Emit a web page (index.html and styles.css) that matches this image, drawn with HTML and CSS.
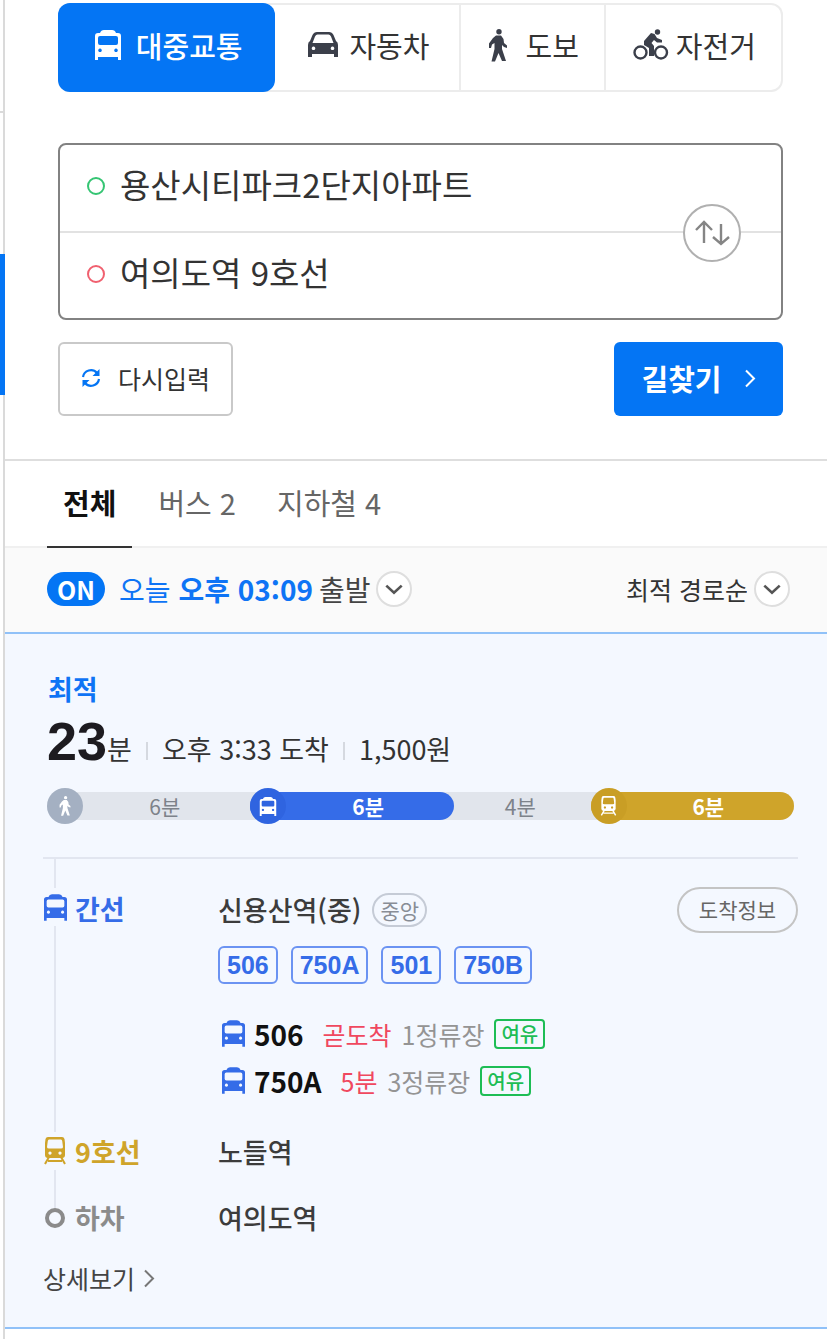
FILE: index.html
```html
<!DOCTYPE html>
<html lang="ko">
<head>
<meta charset="utf-8">
<meta name="viewport" content="width=device-width, initial-scale=1">
<title>길찾기</title>
<link rel="stylesheet" href="styles.css">
</head>
<body>
<svg class="sprite" aria-hidden="true">
  <symbol id="bus" viewBox="0 0 26 30">
    <path fill-rule="evenodd" d="M0 6Q0 3 3 3H5Q6 0 9 0H17Q20 0 21 3H23Q26 3 26 6V30H23V27H3V30H0ZM5 6Q3 6 3 8V13Q3 15 5 15H21Q23 15 23 13V8Q23 6 21 6ZM5 18.500a1.800 1.800 0 1 0 .01 0ZM21 18.500a1.800 1.800 0 1 0 .01 0Z"/>
  </symbol>
  <symbol id="car" viewBox="0 0 30 26">
    <path fill-rule="evenodd" d="M9 0H21Q24 0 25.500 3L28 9Q30 10 30 13V25H26V22H4V25H0V13Q0 10 2 9L4.500 3Q6 0 9 0ZM9.500 2.500Q8 2.500 7 4.500L4.500 11H25.500L23 4.500Q22 2.500 20.500 2.500ZM5.500 14.500a1.800 1.800 0 1 0 .01 0ZM24.500 14.500a1.800 1.800 0 1 0 .01 0Z"/>
  </symbol>
  <symbol id="walk" viewBox="0 0 18 33">
    <circle cx="10" cy="2.800" r="2.700"/>
    <path d="M7 6.500H12L14.500 10L15 14L18 16.500V19L15 18L13 16V20L17 32H13L9.500 24L6 32.500H2.500L5.500 20V14L3 15.500L2 19H0V14.500L4 9Z"/>
  </symbol>
  <symbol id="bike" viewBox="0 0 36 32">
    <circle cx="7.500" cy="23.500" r="6" fill="none" stroke="currentColor" stroke-width="2.400"/>
    <circle cx="28" cy="23.500" r="6" fill="none" stroke="currentColor" stroke-width="2.400"/>
    <circle cx="24.500" cy="3" r="2.700"/>
    <path d="M18 4L21.500 5L24 9L29 11V13.500H24L21 11L18.500 14L21 17V27H16V19L11 16V12Z"/>
  </symbol>
  <symbol id="train" viewBox="0 0 22 28">
    <path fill-rule="evenodd" d="M4 0H18Q20 0 20.500 2L21 6V18Q21 21 18 21H4Q1 21 1 18V6L1.500 2Q2 0 4 0ZM5 2.500Q4 2.500 3.800 4L3 10Q3 11.500 5 11.500H17Q19 11.500 19 10L18.200 4Q18 2.500 17 2.500ZM6 14.500a1.600 1.600 0 1 0 .01 0ZM16 14.500a1.600 1.600 0 1 0 .01 0Z"/>
    <path d="M5 20L1 27M17 20L21 27M4 24H18" fill="none" stroke="currentColor" stroke-width="2"/>
  </symbol>
  <symbol id="down" viewBox="0 0 16 10">
    <path d="M1 1.500L8 8L15 1.500" fill="none" stroke="currentColor" stroke-width="2.400"/>
  </symbol>
  <symbol id="right" viewBox="0 0 12 18">
    <path d="M2 1L10 9L2 17" fill="none" stroke="currentColor" stroke-width="2"/>
  </symbol>
</svg>
<div class="app">
  <div class="rail"><span class="rail-top"></span><span class="rail-gap"></span><span class="rail-active"></span></div>
  <main class="panel">
    <section class="search">
      <div class="modes">
        <button class="mode mode-on" type="button"><svg class="i-bus"><use href="#bus"/></svg>대중교통</button>
        <button class="mode" type="button"><svg class="i-car"><use href="#car"/></svg>자동차</button>
        <button class="mode mode-walk" type="button"><svg class="i-walk"><use href="#walk"/></svg>도보</button>
        <button class="mode mode-bike" type="button"><svg class="i-bike"><use href="#bike"/></svg>자전거</button>
      </div>
      <form class="route-form">
        <div class="fields">
          <div class="field"><span class="dot dot-start"></span><input type="text" aria-label="출발지" value="용산시티파크2단지아파트"></div>
          <div class="field"><span class="dot dot-end"></span><input type="text" aria-label="도착지" value="여의도역 9호선"></div>
          <button class="swap" type="button" aria-label="출발지와 도착지 바꾸기">
            <svg viewBox="0 0 36 26"><path d="M10 23V2M2 10L10 2L18 10M27 4V24M19 17L27 24L35 17"/></svg>
          </button>
        </div>
        <div class="actions">
          <button class="reset" type="reset">
            <svg viewBox="0 0 20 20"><path d="M2 9A8 8 0 0 1 16 5M18 11A8 8 0 0 1 4 15" fill="none" stroke="currentColor" stroke-width="2.200"/><path d="M18.500 1V8H11.500ZM1.500 19V12H8.500Z"/></svg>다시입력
          </button>
          <button class="find" type="submit">길찾기<svg class="i-right"><use href="#right"/></svg></button>
        </div>
      </form>
    </section>
    <nav class="filters">
      <a class="filter filter-on" href="#all">전체</a>
      <a class="filter" href="#busonly">버스 2</a>
      <a class="filter" href="#subway">지하철 4</a>
    </nav>
    <div class="options">
      <button class="depart" type="button"><span class="on">ON</span><span class="when">오늘 <b>오후 03:09</b></span><span>출발</span><span class="round"><svg class="i-down"><use href="#down"/></svg></span></button>
      <label class="sort"><select aria-label="정렬"><option>최적 경로순</option></select><span class="round"><svg class="i-down"><use href="#down"/></svg></span></label>
    </div>
    <article class="card">
      <div class="best">최적</div>
      <div class="summary"><strong>23</strong><span class="unit">분</span><span class="sep"></span><span>오후 3:33 도착</span><span class="sep"></span><span>1,500원</span></div>
      <div class="track">
        <div class="seg seg-walk seg-long"><span class="knob"><svg class="k-walk"><use href="#walk"/></svg></span><span class="mins">6분</span></div>
        <div class="seg seg-bus seg-long"><span class="knob"><svg class="k-bus"><use href="#bus"/></svg></span><span class="mins">6분</span></div>
        <div class="seg seg-short"><span class="mins">4분</span></div>
        <div class="seg seg-train seg-long"><span class="knob"><svg class="k-train"><use href="#train"/></svg></span><span class="mins">6분</span></div>
      </div>
      <ol class="steps">
        <li class="step step-bus">
          <div class="marker"><span class="line lead"></span><span class="badge"><svg class="s-bus"><use href="#bus"/></svg></span><span class="line"></span></div>
          <div class="kind">간선</div>
          <div class="detail">
            <div class="stop-row"><span class="stop">신용산역(중)</span><span class="center">중앙</span><button class="info" type="button">도착정보</button></div>
            <div class="chips"><span class="chip">506</span><span class="chip">750A</span><span class="chip">501</span><span class="chip">750B</span></div>
            <div class="arrivals">
              <div class="arrival"><svg class="s-bus"><use href="#bus"/></svg><b>506</b><span class="soon">곧도착</span><span class="stops">1정류장</span><span class="room">여유</span></div>
              <div class="arrival"><svg class="s-bus"><use href="#bus"/></svg><b>750A</b><span class="soon">5분</span><span class="stops">3정류장</span><span class="room">여유</span></div>
            </div>
          </div>
        </li>
        <li class="step step-train">
          <div class="marker"><span class="badge"><svg class="s-train"><use href="#train"/></svg></span><span class="line"></span></div>
          <div class="kind">9호선</div>
          <div class="detail stop">노들역</div>
        </li>
        <li class="step step-off">
          <div class="marker"><span class="line tail"></span><span class="ring"></span></div>
          <div class="kind">하차</div>
          <div class="detail stop">여의도역</div>
        </li>
      </ol>
      <a class="more" href="#detail">상세보기<svg class="i-more"><use href="#right"/></svg></a>
    </article>
  </main>
</div>
</body>
</html>
```
FILE: styles.css
```css
* { box-sizing: border-box; }
body {
  margin: 0;
  background: #fff;
  color: #333;
  font-family: "Noto Sans CJK KR", sans-serif;
  font-size: 27px;
  line-height: 40px;
}
button, input, select {
  margin: 0;
  padding: 0;
  border: 0;
  background: none;
  color: inherit;
  font: inherit;
}
button { cursor: pointer; }
a { color: inherit; text-decoration: none; }
svg { display: block; flex: none; fill: currentColor; }
.sprite { position: absolute; width: 0; height: 0; }

.app { display: grid; grid-template-columns: 5px 1fr; min-height: 100vh; }
.rail { display: flex; flex-direction: column; background: linear-gradient(to right, #fff 3px, #dadada 3px); }
.rail-top { height: 113px; border-bottom: 2px solid #dadada; }
.rail-gap { height: 141px; }
.rail-active { height: 141px; background: #0475f4; }

.search { padding: 3px 44px 43px 53px; border-bottom: 2px solid #dedede; }
.modes {
  display: grid;
  grid-template-columns: 217fr 183fr 145fr 179fr;
  height: 89px;
  border-radius: 12px;
  box-shadow: inset 0 0 0 2px #ececec;
}
.mode {
  display: flex;
  align-items: center;
  justify-content: center;
  gap: 11px;
  padding: 0 0 5px 4px;
  font-size: 29px;
}
.mode svg { color: #3b3f4a; }
.mode-on { border-radius: 12px; background: #0475f4; color: #fff; font-weight: 500; gap: 15px; }
.mode-on svg { color: #fff; }
.mode-walk { border-left: 2px solid #ececec; gap: 18px; }
.mode-bike { padding-left: 0; border-left: 2px solid #ececec; gap: 7px; }
.i-bus { width: 26px; height: 30px; }
.i-car { width: 30px; height: 26px; }
.i-walk { width: 18px; height: 33px; }
.i-bike { width: 36px; height: 32px; }

.fields {
  position: relative;
  margin-top: 51px;
  border: 2px solid #828282;
  border-radius: 8px;
}
.field { display: flex; align-items: center; height: 86px; padding: 0 120px 4px 27px; }
.field + .field { height: 87px; border-top: 2px solid #e2e2e2; }
.field input { flex: 1; min-width: 0; height: 56px; margin-left: 15px; padding-bottom: 4px; font-size: 33px; outline: 0; }
.dot { width: 18px; height: 18px; border: 2px solid; border-radius: 50%; }
.dot-start { color: #35c573; }
.dot-end { color: #f0606f; }
.swap {
  position: absolute;
  right: 40px;
  top: 59px;
  display: grid;
  place-items: center;
  width: 58px;
  height: 58px;
  border: 2px solid #b0b0b0;
  border-radius: 50%;
  background: #fff;
}
.swap svg { width: 36px; height: 26px; fill: none; stroke: #858585; stroke-width: 2.4; }
.actions { display: flex; justify-content: space-between; margin-top: 22px; }
.reset, .find { display: flex; align-items: center; justify-content: center; height: 74px; padding-bottom: 2px; border-radius: 6px; }
.reset { width: 175px; gap: 17px; border: 2px solid #c9c9c9; font-size: 25px; }
.reset svg { width: 20px; height: 20px; color: #0475f4; }
.find { width: 169px; gap: 22px; background: #0475f4; color: #fff; font-size: 29px; font-weight: 700; }
.i-right { width: 12px; height: 19px; }

.filters { display: flex; height: 87px; padding-left: 42px; border-bottom: 2px solid #f0f0f0; }
.filter { height: 87px; padding: 0 26px 0 16px; color: #666; font-size: 29px; line-height: 82px; }
.filter + .filter { padding-left: 26px; padding-right: 15px; }
.filter-on { padding: 0 16px; border-bottom: 2px solid #333; color: #111; font-weight: 700; }

.options {
  display: flex;
  align-items: center;
  justify-content: space-between;
  height: 84px;
  padding: 0 37px 2px 42px;
  background: #fafafa;
}
.depart { display: flex; align-items: center; gap: 6px; font-size: 28px; color: #444; }
.on { width: 58px; margin-right: 8px; border-radius: 17px; background: #0475f4; color: #fff; font-size: 25px; font-weight: 700; line-height: 34px; }
.when { color: #0e74f5; }
.round { display: grid; place-items: center; width: 36px; height: 36px; border: 2px solid #dedede; border-radius: 50%; background: #fff; color: #555; }
.i-down { width: 18px; height: 11px; }
.sort { display: flex; align-items: center; gap: 7px; font-size: 25px; }
.sort select { appearance: none; }

.card { padding: 35px 29px 29px 38px; border: solid #90c1f8; border-width: 2px 0; background: #f4f8ff; }
.best { padding-left: 5px; color: #0e74f5; font-weight: 700; }
.summary { display: flex; align-items: baseline; height: 64px; padding-left: 4px; line-height: 64px; }
.summary strong { color: #1d1b20; font-family: "Liberation Sans", sans-serif; font-size: 54px; }
.sep { width: 2px; height: 18px; margin: 0 14px; background: #d5d9e0; }
.track { display: flex; height: 28px; margin: 19px 4px 37px; border-radius: 14px; background: #e1e5ec; }
.seg { display: flex; align-items: center; min-width: 0; border-radius: 14px; color: #7d828a; font-size: 21px; line-height: 28px; }
.seg-long { flex: 204; }
.seg-short { flex: 137; }
.seg-bus { background: #356ce8; color: #fff; font-weight: 700; }
.seg-train { background: #cfa42a; color: #fff; font-weight: 700; }
.knob { display: grid; flex: none; place-items: center; width: 36px; height: 36px; border-radius: 50%; background: #a4b0c2; color: #fff; }
.seg-bus .knob { background: #2f64e0; }
.seg-train .knob { background: #c99e25; }
.k-walk { width: 12px; height: 20px; }
.k-bus { width: 18px; height: 19px; }
.k-train { width: 17px; height: 20px; }
.mins { flex: 1; padding-right: 4px; text-align: center; }

.steps { margin: 0; padding: 0; border-top: 2px solid #e2e6f0; list-style: none; }
.step { display: grid; grid-template-columns: 24px 151px 1fr; }
.step-bus { height: 273px; color: #356ce8; }
.step-train { height: 66px; color: #cfa42a; }
.step-off { color: #8b8b8b; }
.marker { display: flex; flex-direction: column; align-items: center; }
.line { flex: 1; width: 2px; background: #e2e6f0; }
.lead { flex: none; height: 29px; }
.tail { flex: none; height: 10px; }
.badge { display: grid; place-items: center; height: 38px; }
.s-bus { width: 23px; height: 27px; }
.s-train { width: 22px; height: 28px; }
.ring { width: 20px; height: 20px; border: 4px solid #8b8b8b; border-radius: 50%; }
.kind { padding-left: 8px; font-weight: 700; }
.step-bus .kind { padding-top: 30px; }
.stop { color: #3c3c3c; font-weight: 500; }
.stop-row { display: flex; align-items: center; height: 46px; margin-top: 28px; }
.center { margin-left: 11px; padding: 0 6px; border: 2px solid #c5cbd6; border-radius: 17px; color: #888d96; font-size: 21px; line-height: 30px; }
.info { width: 121px; height: 46px; margin-left: auto; padding-bottom: 2px; border: 2px solid #c4c4c4; border-radius: 23px; color: #666; font-size: 21px; }
.chips { display: flex; gap: 13px; margin-top: 13px; }
.chip { padding: 0 7px; border: 2px solid #6b93f2; border-radius: 6px; font-family: "Liberation Sans", sans-serif; font-size: 25px; font-weight: 700; line-height: 34px; }
.arrivals { margin-top: 26px; }
.arrival { display: flex; align-items: center; height: 47px; padding-left: 4px; font-size: 25px; }
.arrival b { margin: 0 19px 0 9px; color: #111; font-size: 28px; }
.soon { color: #f0485f; }
.stops { margin: 0 10px; color: #949494; }
.room { padding: 0 5px; border: 2px solid #1dbd55; border-radius: 4px; color: #1dbd55; font-size: 20px; font-weight: 500; line-height: 26px; }
.more { display: inline-flex; align-items: center; gap: 8px; margin-top: 20px; font-size: 25px; color: #444; }
.i-more { width: 12px; height: 19px; color: #777; }
```
